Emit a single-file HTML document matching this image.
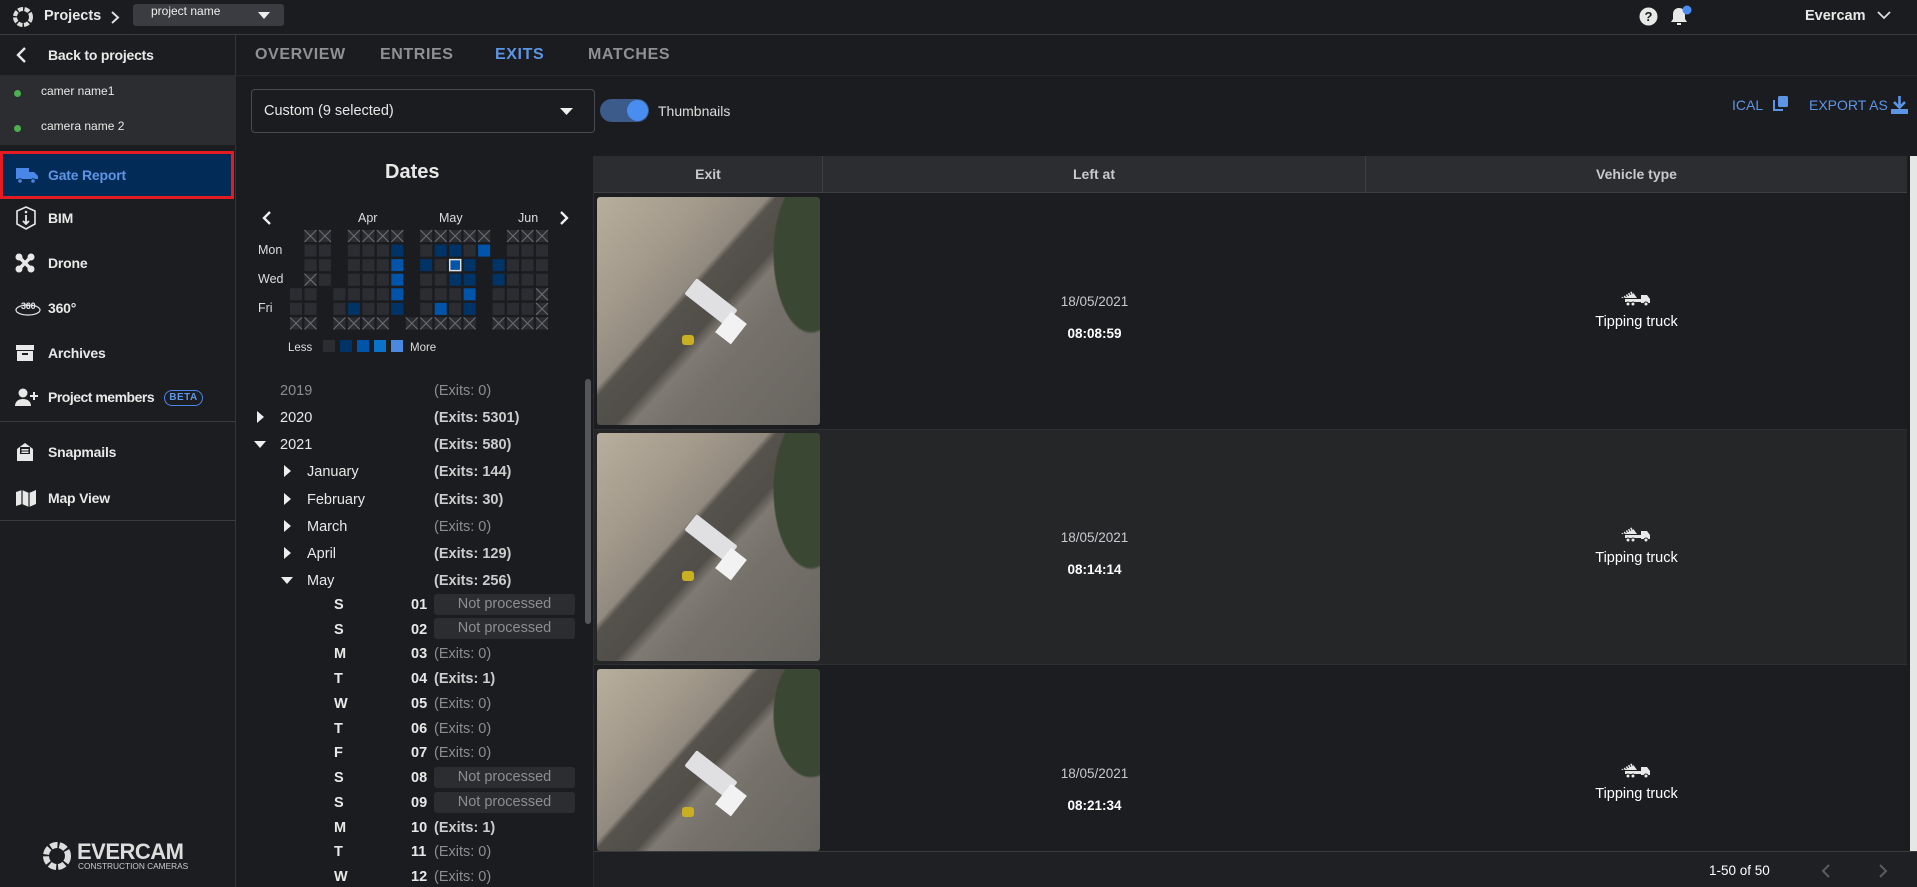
<!DOCTYPE html>
<html><head><meta charset="utf-8">
<style>
*{box-sizing:border-box;margin:0;padding:0}
html,body{width:1917px;height:887px;overflow:hidden;background:#1b1c1f;font-family:"Liberation Sans",Arial,sans-serif;color:#e8e8e8}
.a{position:absolute}
.top{left:0;top:0;width:1917px;height:35px;background:#1b1c1f;border-bottom:1px solid #3a3b3f}
.side{left:0;top:35px;width:236px;height:852px;background:#1c1d20;border-right:1px solid #333438}
.it{position:absolute;left:0;width:236px;height:40px;display:flex;align-items:center;font-size:14px;font-weight:bold;color:#e8e8e8;letter-spacing:-.2px}
.it svg{position:absolute;left:15px}
.it span{position:absolute;left:48px}
.tab{top:46px;font-size:16px;font-weight:bold;letter-spacing:.6px;color:#8e9096}
.yr{font-size:14.5px}
.gr{color:#8c8d92}
.np{position:absolute;left:434px;width:141px;height:21px;background:#2c2d31;border-radius:3px;color:#8c8d92;font-size:14.5px;text-align:center;line-height:21px}
.th{top:156px;height:37px;background:#2c2d30;border-bottom:1px solid #3e3f43;font-size:14px;font-weight:bold;color:#c8c9cc;text-align:center;line-height:36px}
.img{position:absolute;left:597px;width:223px;border-radius:3px;overflow:hidden;
background:
radial-gradient(ellipse 22% 45% at 96% 25%,#3a4733 0 75%,transparent 78%),
linear-gradient(132deg,transparent 0 40%,rgba(40,38,36,.55) 42% 52%,transparent 56%),
linear-gradient(132deg,#b8ae9e 0%,#a49a8b 25%,#8a847b 45%,#76716b 65%,#68645f 100%)}
.img .tr{position:absolute;left:88px;top:95px;width:52px;height:20px;background:#e0e0e2;transform:rotate(38deg);border-radius:2px}
.img .tr2{position:absolute;left:124px;top:118px;width:20px;height:26px;background:#f2f2f2;transform:rotate(38deg)}
.img .y{position:absolute;left:85px;top:138px;width:12px;height:10px;background:#c8b022;border-radius:3px}
.cell{font-size:13.5px;color:#c8c9cc}
</style></head><body>

<div class="a top">
  <svg class="a" style="left:12px;top:6px" width="22" height="22" viewBox="0 0 22 22"><circle cx="11" cy="11" r="8" fill="none" stroke="#ddd" stroke-width="4" stroke-dasharray="5 1.5"/><circle cx="11" cy="11" r="4" fill="#1b1c1f"/></svg>
  <div class="a" style="left:44px;top:8px;font-size:14.5px;font-weight:bold">Projects</div>
  <svg class="a" style="left:110px;top:11px" width="10" height="13"><path d="M2 1l6 5.5L2 12" stroke="#ddd" stroke-width="2" fill="none"/></svg>
  <div class="a" style="left:133px;top:4px;width:151px;height:22px;background:#3a3c42;border-radius:3px"></div>
  <div class="a" style="left:151px;top:4px;font-size:12px;color:#eee">project name</div>
  <svg class="a" style="left:258px;top:12px" width="12" height="7"><path d="M0 0h12L6 7z" fill="#eee"/></svg>
  <svg class="a" style="left:1639px;top:7px" width="19" height="19"><circle cx="9.5" cy="9.5" r="9" fill="#e8e8e8"/><text x="9.5" y="14" font-size="13" font-weight="bold" text-anchor="middle" fill="#1b1c1f" font-family="Liberation Sans">?</text></svg>
  <svg class="a" style="left:1670px;top:5px" width="24" height="22"><path d="M9 3c-4 0-6 3-6 6v5l-2 3h16l-2-3V9c0-3-2-6-6-6z" fill="#e8e8e8"/><rect x="7" y="18" width="4" height="2" fill="#e8e8e8"/><circle cx="17" cy="5" r="4.5" fill="#4a8df0"/></svg>
  <div class="a" style="left:1805px;top:8px;font-size:14.5px;font-weight:bold">Evercam</div>
  <svg class="a" style="left:1877px;top:11px" width="14" height="9"><path d="M1 1l6 6 6-6" stroke="#ddd" stroke-width="1.8" fill="none"/></svg>
</div>

<div class="a side">
  <div class="it" style="top:0"><svg width="14" height="16"><path d="M10 1L3 8l7 7" stroke="#e8e8e8" stroke-width="2.4" fill="none"/></svg><span>Back to projects</span></div>
  <div class="a" style="left:0;top:40px;width:236px;height:70px;background:#2c2d30"></div>
  <div class="a" style="left:14px;top:55px;width:7px;height:7px;border-radius:50%;background:#4caf50"></div>
  <div class="a" style="left:41px;top:49px;font-size:12px">camer name1</div>
  <div class="a" style="left:14px;top:90px;width:7px;height:7px;border-radius:50%;background:#4caf50"></div>
  <div class="a" style="left:41px;top:84px;font-size:12px">camera name 2</div>
  <div class="a" style="left:0;top:116px;width:234px;height:48px;background:#032b57;border:3px solid #e31b23"></div>
  <div class="it" style="top:120px;color:#5d95e6"><svg width="24" height="18"><path d="M1 2h13v11H1zM14 6h5l4 4v3h-9z" fill="#4a86e8"/><circle cx="5" cy="15" r="2.3" fill="#4a86e8" stroke="#032b57"/><circle cx="18" cy="15" r="2.3" fill="#4a86e8" stroke="#032b57"/></svg><span>Gate Report</span></div>
  <div class="it" style="top:163px"><svg width="22" height="24"><path d="M11 1l9 4v13l-9 5-9-5V5z" fill="none" stroke="#e8e8e8" stroke-width="1.6"/><path d="M11 9v9M8 15l3 3 3-3" stroke="#e8e8e8" stroke-width="1.8" fill="none"/><circle cx="11" cy="6" r="1.3" fill="#e8e8e8"/></svg><span>BIM</span></div>
  <div class="it" style="top:208px"><svg width="20" height="20"><circle cx="4" cy="4" r="3.5" fill="#e8e8e8"/><circle cx="16" cy="4" r="3.5" fill="#e8e8e8"/><circle cx="4" cy="16" r="3.5" fill="#e8e8e8"/><circle cx="16" cy="16" r="3.5" fill="#e8e8e8"/><path d="M4 4l12 12M16 4L4 16" stroke="#e8e8e8" stroke-width="3.5"/></svg><span>Drone</span></div>
  <div class="it" style="top:253px"><svg width="28" height="20"><text x="6" y="11" font-size="9" fill="#e8e8e8" font-family="Liberation Sans">360</text><ellipse cx="13" cy="12" rx="12" ry="5" fill="none" stroke="#e8e8e8" stroke-width="1.2"/></svg><span>360°</span></div>
  <div class="it" style="top:298px"><svg width="20" height="18"><rect x="1" y="1" width="18" height="5" fill="#e8e8e8"/><rect x="2" y="7" width="16" height="10" fill="#e8e8e8"/><rect x="7" y="9" width="6" height="2" fill="#1c1d20"/></svg><span>Archives</span></div>
  <div class="it" style="top:342px"><svg width="24" height="20"><circle cx="8" cy="6" r="4.5" fill="#e8e8e8"/><path d="M0 19c0-5 4-7 8-7s8 2 8 7z" fill="#e8e8e8"/><path d="M19 5v8M15 9h8" stroke="#e8e8e8" stroke-width="2"/></svg><span style="letter-spacing:-.5px">Project members</span></div>
  <div class="a" style="left:164px;top:355px;width:39px;height:16px;border:1.5px solid #4a86e8;border-radius:8px;font-size:10px;font-weight:bold;color:#5d95e6;text-align:center;line-height:13px;letter-spacing:.5px">BETA</div>
  <div class="a" style="left:0;top:386px;width:236px;height:1px;background:#3a3b3f"></div>
  <div class="it" style="top:397px"><svg width="20" height="20"><path d="M2 7l8-6 8 6v12H2z" fill="#e8e8e8"/><rect x="5" y="5" width="10" height="7" fill="#1c1d20"/><rect x="6.5" y="7" width="7" height="1.5" fill="#e8e8e8"/><rect x="6.5" y="9.5" width="7" height="1.5" fill="#e8e8e8"/></svg><span>Snapmails</span></div>
  <div class="it" style="top:443px"><svg width="22" height="20"><path d="M1 4l6-2 7 3 7-3v14l-7 3-7-3-6 2z" fill="#e8e8e8"/><path d="M7 2v15M14 5v15" stroke="#1c1d20" stroke-width="1.2"/></svg><span>Map View</span></div>
  <div class="a" style="left:0;top:485px;width:236px;height:1px;background:#3a3b3f"></div>
  <svg class="a" style="left:42px;top:806px" width="30" height="30" viewBox="0 0 30 30"><circle cx="15" cy="15" r="11" fill="none" stroke="#ddd" stroke-width="6" stroke-dasharray="7 2"/><circle cx="15" cy="15" r="5" fill="#1c1d20"/></svg>
  <div class="a" style="left:77px;top:804px;font-size:22px;font-weight:bold;color:#ddd;letter-spacing:-.5px">EVERCAM</div>
  <div class="a" style="left:78px;top:826px;font-size:8.3px;color:#ccc">CONSTRUCTION CAMERAS</div>
</div>

<div class="a tab" style="left:255px">OVERVIEW</div>
<div class="a tab" style="left:380px">ENTRIES</div>
<div class="a tab" style="left:495px;color:#5d95e6">EXITS</div>
<div class="a tab" style="left:588px">MATCHES</div>
<div class="a" style="left:236px;top:75px;width:1681px;height:1px;background:#26272a"></div>

<div class="a" style="left:251px;top:89px;width:344px;height:44px;border:1px solid #4a4b50;border-radius:4px"></div>
<div class="a" style="left:264px;top:103px;font-size:14.5px">Custom (9 selected)</div>
<svg class="a" style="left:560px;top:108px" width="13" height="7"><path d="M0 0h13L6.5 7z" fill="#eee"/></svg>
<div class="a" style="left:600px;top:99px;width:49px;height:23px;border-radius:12px;background:#3c5a8a"></div>
<div class="a" style="left:627px;top:100px;width:21px;height:21px;border-radius:50%;background:#4a8df0"></div>
<div class="a" style="left:658px;top:103px;font-size:14px;color:#ddd">Thumbnails</div>
<div class="a" style="left:1732px;top:97px;font-size:14px;color:#5d95e6">ICAL</div>
<svg class="a" style="left:1773px;top:96px" width="15" height="15"><rect x="5" y="0" width="10" height="11" rx="1.5" fill="#5d95e6"/><path d="M1 4v10h9" stroke="#5d95e6" stroke-width="2" fill="none"/></svg>
<div class="a" style="left:1809px;top:97px;font-size:14px;color:#5d95e6">EXPORT AS</div>
<svg class="a" style="left:1890px;top:95px" width="19" height="20"><path d="M9.5 1v11M4 7l5.5 5.5L15 7" stroke="#5d95e6" stroke-width="2.6" fill="none"/><path d="M1 14h17v5H1z" fill="#5d95e6"/></svg>

<div class="a" style="left:385px;top:161px;font-size:20px;font-weight:bold">Dates</div>
<svg class="a" style="left:262px;top:211px" width="10" height="14"><path d="M8 1L2 7l6 6" stroke="#eee" stroke-width="2.4" fill="none"/></svg>
<svg class="a" style="left:559px;top:211px" width="10" height="14"><path d="M2 1l6 6-6 6" stroke="#eee" stroke-width="2.4" fill="none"/></svg>
<div class="a" style="left:358px;top:211px;font-size:12.5px;color:#ddd">Apr</div>
<div class="a" style="left:439px;top:211px;font-size:12.5px;color:#ddd">May</div>
<div class="a" style="left:518px;top:211px;font-size:12.5px;color:#ddd">Jun</div>
<div class="a" style="left:258px;top:243px;font-size:12.5px;color:#ddd">Mon</div>
<div class="a" style="left:258px;top:272px;font-size:12.5px;color:#ddd">Wed</div>
<div class="a" style="left:258px;top:301px;font-size:12.5px;color:#ddd">Fri</div>
<svg class="a" style="left:0;top:0" width="600" height="360">
<defs>
<g id="d"><rect width="12" height="12" fill="#2c2d33"/></g>
<g id="x"><rect width="12" height="12" fill="#2c2d33"/><path d="M0 0L12 12M12 0L0 12" stroke="#6a6b70" stroke-width="1.1"/></g>
<g id="b1"><rect width="12" height="12" fill="#003466"/></g>
<g id="b2"><rect width="12" height="12" fill="#0055aa"/></g>
</defs>
<use href="#x" x="304.5" y="230"/><use href="#x" x="319" y="230"/><use href="#x" x="347.9" y="230"/><use href="#x" x="362.4" y="230"/><use href="#x" x="376.8" y="230"/><use href="#x" x="391.3" y="230"/><use href="#x" x="420.2" y="230"/><use href="#x" x="434.7" y="230"/><use href="#x" x="449.2" y="230"/><use href="#x" x="463.6" y="230"/><use href="#x" x="478.1" y="230"/><use href="#x" x="507" y="230"/><use href="#x" x="521.5" y="230"/><use href="#x" x="536" y="230"/>
<use href="#d" x="304.5" y="244.6"/><use href="#d" x="319" y="244.6"/><use href="#d" x="347.9" y="244.6"/><use href="#d" x="362.4" y="244.6"/><use href="#d" x="376.8" y="244.6"/><use href="#b1" x="391.3" y="244.6"/><use href="#d" x="420.2" y="244.6"/><use href="#b1" x="434.7" y="244.6"/><use href="#b1" x="449.2" y="244.6"/><use href="#d" x="463.6" y="244.6"/><use href="#b2" x="478.1" y="244.6"/><use href="#d" x="507" y="244.6"/><use href="#d" x="521.5" y="244.6"/><use href="#d" x="536" y="244.6"/>
<use href="#d" x="304.5" y="259.1"/><use href="#d" x="319" y="259.1"/><use href="#d" x="347.9" y="259.1"/><use href="#d" x="362.4" y="259.1"/><use href="#d" x="376.8" y="259.1"/><use href="#b2" x="391.3" y="259.1"/><use href="#b1" x="420.2" y="259.1"/><use href="#d" x="434.7" y="259.1"/><rect x="449.7" y="259.6" width="11" height="11" fill="#0055aa" stroke="#e0e0e0" stroke-width="1.5"/><use href="#b1" x="463.6" y="259.1"/><use href="#b1" x="492.6" y="259.1"/><use href="#d" x="507" y="259.1"/><use href="#d" x="521.5" y="259.1"/><use href="#d" x="536" y="259.1"/>
<use href="#x" x="304.5" y="273.7"/><use href="#d" x="319" y="273.7"/><use href="#d" x="347.9" y="273.7"/><use href="#d" x="362.4" y="273.7"/><use href="#d" x="376.8" y="273.7"/><use href="#b2" x="391.3" y="273.7"/><use href="#d" x="420.2" y="273.7"/><use href="#d" x="434.7" y="273.7"/><use href="#b1" x="449.2" y="273.7"/><use href="#b1" x="463.6" y="273.7"/><use href="#b1" x="492.6" y="273.7"/><use href="#d" x="507" y="273.7"/><use href="#d" x="521.5" y="273.7"/><use href="#d" x="536" y="273.7"/>
<use href="#d" x="290" y="288.3"/><use href="#d" x="304.5" y="288.3"/><use href="#d" x="333.4" y="288.3"/><use href="#d" x="347.9" y="288.3"/><use href="#d" x="362.4" y="288.3"/><use href="#d" x="376.8" y="288.3"/><use href="#b2" x="391.3" y="288.3"/><use href="#d" x="420.2" y="288.3"/><use href="#d" x="434.7" y="288.3"/><use href="#d" x="449.2" y="288.3"/><use href="#b2" x="463.6" y="288.3"/><use href="#d" x="492.6" y="288.3"/><use href="#d" x="507" y="288.3"/><use href="#d" x="521.5" y="288.3"/><use href="#x" x="536" y="288.3"/>
<use href="#d" x="290" y="302.9"/><use href="#d" x="304.5" y="302.9"/><use href="#d" x="333.4" y="302.9"/><use href="#b1" x="347.9" y="302.9"/><use href="#d" x="362.4" y="302.9"/><use href="#d" x="376.8" y="302.9"/><use href="#b1" x="391.3" y="302.9"/><use href="#d" x="420.2" y="302.9"/><use href="#b2" x="434.7" y="302.9"/><use href="#d" x="449.2" y="302.9"/><use href="#b1" x="463.6" y="302.9"/><use href="#d" x="492.6" y="302.9"/><use href="#d" x="507" y="302.9"/><use href="#d" x="521.5" y="302.9"/><use href="#x" x="536" y="302.9"/>
<use href="#x" x="290" y="317.4"/><use href="#x" x="304.5" y="317.4"/><use href="#x" x="333.4" y="317.4"/><use href="#x" x="347.9" y="317.4"/><use href="#x" x="362.4" y="317.4"/><use href="#x" x="376.8" y="317.4"/><use href="#x" x="405.8" y="317.4"/><use href="#x" x="420.2" y="317.4"/><use href="#x" x="434.7" y="317.4"/><use href="#x" x="449.2" y="317.4"/><use href="#x" x="463.6" y="317.4"/><use href="#x" x="492.6" y="317.4"/><use href="#x" x="507" y="317.4"/><use href="#x" x="521.5" y="317.4"/><use href="#x" x="536" y="317.4"/>
<rect x="323" y="340" width="12" height="12" fill="#2c2d33"/><rect x="340" y="340" width="12" height="12" fill="#003466"/><rect x="357" y="340" width="12" height="12" fill="#0055aa"/><rect x="374" y="340" width="12" height="12" fill="#0b72c9"/><rect x="391" y="340" width="12" height="12" fill="#4a89e0"/>
<text x="288" y="351" font-size="11.5" fill="#ddd" font-family="Liberation Sans">Less</text>
<text x="410" y="351" font-size="11.5" fill="#ddd" font-family="Liberation Sans">More</text>
</svg>

<div class="a yr gr" style="left:280px;top:383px">2019</div><div class="a yr gr" style="left:434px;top:383px">(Exits: 0)</div>
<svg class="a" style="left:257px;top:411px" width="8" height="12"><path d="M0 0l7 6-7 6z" fill="#eee"/></svg>
<div class="a yr" style="left:280px;top:410px">2020</div><div class="a yr" style="left:434px;top:410px;font-weight:bold;color:#ccc">(Exits: 5301)</div>
<svg class="a" style="left:254px;top:441px" width="12" height="8"><path d="M0 0h12L6 7z" fill="#eee"/></svg>
<div class="a yr" style="left:280px;top:437px">2021</div><div class="a yr" style="left:434px;top:437px;font-weight:bold;color:#ccc">(Exits: 580)</div>
<svg class="a" style="left:284px;top:465px" width="8" height="12"><path d="M0 0l7 6-7 6z" fill="#eee"/></svg>
<div class="a yr" style="left:307px;top:464px">January</div><div class="a yr" style="left:434px;top:464px;font-weight:bold;color:#ccc">(Exits: 144)</div>
<svg class="a" style="left:284px;top:493px" width="8" height="12"><path d="M0 0l7 6-7 6z" fill="#eee"/></svg>
<div class="a yr" style="left:307px;top:492px">February</div><div class="a yr" style="left:434px;top:492px;font-weight:bold;color:#ccc">(Exits: 30)</div>
<svg class="a" style="left:284px;top:520px" width="8" height="12"><path d="M0 0l7 6-7 6z" fill="#eee"/></svg>
<div class="a yr" style="left:307px;top:519px">March</div><div class="a yr gr" style="left:434px;top:519px">(Exits: 0)</div>
<svg class="a" style="left:284px;top:547px" width="8" height="12"><path d="M0 0l7 6-7 6z" fill="#eee"/></svg>
<div class="a yr" style="left:307px;top:546px">April</div><div class="a yr" style="left:434px;top:546px;font-weight:bold;color:#ccc">(Exits: 129)</div>
<svg class="a" style="left:281px;top:577px" width="12" height="8"><path d="M0 0h12L6 7z" fill="#eee"/></svg>
<div class="a yr" style="left:307px;top:573px">May</div><div class="a yr" style="left:434px;top:573px;font-weight:bold;color:#ccc">(Exits: 256)</div>

<div class="a yr" style="left:334px;top:597px;font-weight:bold">S</div><div class="a yr" style="left:411px;top:597px;font-weight:bold">01</div><div class="np" style="top:594px">Not processed</div>
<div class="a yr" style="left:334px;top:622px;font-weight:bold">S</div><div class="a yr" style="left:411px;top:622px;font-weight:bold">02</div><div class="np" style="top:618px">Not processed</div>
<div class="a yr" style="left:334px;top:646px;font-weight:bold">M</div><div class="a yr" style="left:411px;top:646px;font-weight:bold">03</div><div class="a yr gr" style="left:434px;top:646px">(Exits: 0)</div>
<div class="a yr" style="left:334px;top:671px;font-weight:bold">T</div><div class="a yr" style="left:411px;top:671px;font-weight:bold">04</div><div class="a yr" style="left:434px;top:671px;font-weight:bold;color:#ccc">(Exits: 1)</div>
<div class="a yr" style="left:334px;top:696px;font-weight:bold">W</div><div class="a yr" style="left:411px;top:696px;font-weight:bold">05</div><div class="a yr gr" style="left:434px;top:696px">(Exits: 0)</div>
<div class="a yr" style="left:334px;top:721px;font-weight:bold">T</div><div class="a yr" style="left:411px;top:721px;font-weight:bold">06</div><div class="a yr gr" style="left:434px;top:721px">(Exits: 0)</div>
<div class="a yr" style="left:334px;top:745px;font-weight:bold">F</div><div class="a yr" style="left:411px;top:745px;font-weight:bold">07</div><div class="a yr gr" style="left:434px;top:745px">(Exits: 0)</div>
<div class="a yr" style="left:334px;top:770px;font-weight:bold">S</div><div class="a yr" style="left:411px;top:770px;font-weight:bold">08</div><div class="np" style="top:767px">Not processed</div>
<div class="a yr" style="left:334px;top:795px;font-weight:bold">S</div><div class="a yr" style="left:411px;top:795px;font-weight:bold">09</div><div class="np" style="top:792px">Not processed</div>
<div class="a yr" style="left:334px;top:820px;font-weight:bold">M</div><div class="a yr" style="left:411px;top:820px;font-weight:bold">10</div><div class="a yr" style="left:434px;top:820px;font-weight:bold;color:#ccc">(Exits: 1)</div>
<div class="a yr" style="left:334px;top:844px;font-weight:bold">T</div><div class="a yr" style="left:411px;top:844px;font-weight:bold">11</div><div class="a yr gr" style="left:434px;top:844px">(Exits: 0)</div>
<div class="a yr" style="left:334px;top:869px;font-weight:bold">W</div><div class="a yr" style="left:411px;top:869px;font-weight:bold">12</div><div class="a yr gr" style="left:434px;top:869px">(Exits: 0)</div>
<div class="a" style="left:585px;top:379px;width:6px;height:245px;background:#55565a;border-radius:3px"></div>
<div class="a" style="left:593px;top:156px;width:1px;height:731px;background:#2c2d30"></div>

<div class="a" style="left:594px;top:193px;width:1313px;height:236px;background:#1c1d20"></div>
<div class="a" style="left:594px;top:429px;width:1313px;height:236px;background:#252628;border-top:1px solid #2e2f32;border-bottom:1px solid #2e2f32"></div>
<div class="a" style="left:594px;top:665px;width:1313px;height:186px;background:#1c1d20"></div>
<div class="a th" style="left:594px;width:229px;border-right:1px solid #3e3f43">Exit</div>
<div class="a th" style="left:823px;width:543px;border-right:1px solid #3e3f43">Left at</div>
<div class="a th" style="left:1366px;width:541px">Vehicle type</div>
<div class="a" style="left:1910px;top:156px;width:7px;height:695px;background:#e6e6e6"></div>

<div class="img" style="top:197px;height:228px"><div class="tr"></div><div class="tr2"></div><div class="y"></div></div>
<div class="img" style="top:433px;height:228px"><div class="tr"></div><div class="tr2"></div><div class="y"></div></div>
<div class="img" style="top:669px;height:182px"><div class="tr"></div><div class="tr2"></div><div class="y"></div></div>

<div class="a cell" style="left:823px;width:543px;text-align:center;top:294px">18/05/2021</div>
<div class="a cell" style="left:823px;width:543px;text-align:center;top:326px;color:#fff;font-weight:bold">08:08:59</div>
<div class="a cell" style="left:823px;width:543px;text-align:center;top:530px">18/05/2021</div>
<div class="a cell" style="left:823px;width:543px;text-align:center;top:562px;color:#fff;font-weight:bold">08:14:14</div>
<div class="a cell" style="left:823px;width:543px;text-align:center;top:766px">18/05/2021</div>
<div class="a cell" style="left:823px;width:543px;text-align:center;top:798px;color:#fff;font-weight:bold">08:21:34</div>

<svg class="a" style="left:1619px;top:289px" width="33" height="18"><path d="M2 9l11-7 5 7z" fill="#e8e8e8"/><path d="M4 8l10-5" stroke="#1c1d20" stroke-dasharray="1 1.5" stroke-width="3"/><rect x="6" y="10" width="16" height="3" fill="#e8e8e8"/><path d="M22 6h6l3 4v4h-9z" fill="#e8e8e8"/><circle cx="9" cy="15" r="2" fill="#e8e8e8" stroke="#1c1d20"/><circle cx="14" cy="15" r="2" fill="#e8e8e8" stroke="#1c1d20"/><circle cx="27" cy="15" r="2" fill="#e8e8e8" stroke="#1c1d20"/></svg>
<div class="a" style="left:1366px;width:541px;text-align:center;top:314px;font-size:14.5px;color:#fff">Tipping truck</div>
<svg class="a" style="left:1619px;top:525px" width="33" height="18"><path d="M2 9l11-7 5 7z" fill="#e8e8e8"/><path d="M4 8l10-5" stroke="#252628" stroke-dasharray="1 1.5" stroke-width="3"/><rect x="6" y="10" width="16" height="3" fill="#e8e8e8"/><path d="M22 6h6l3 4v4h-9z" fill="#e8e8e8"/><circle cx="9" cy="15" r="2" fill="#e8e8e8" stroke="#252628"/><circle cx="14" cy="15" r="2" fill="#e8e8e8" stroke="#252628"/><circle cx="27" cy="15" r="2" fill="#e8e8e8" stroke="#252628"/></svg>
<div class="a" style="left:1366px;width:541px;text-align:center;top:550px;font-size:14.5px;color:#fff">Tipping truck</div>
<svg class="a" style="left:1619px;top:761px" width="33" height="18"><path d="M2 9l11-7 5 7z" fill="#e8e8e8"/><path d="M4 8l10-5" stroke="#1c1d20" stroke-dasharray="1 1.5" stroke-width="3"/><rect x="6" y="10" width="16" height="3" fill="#e8e8e8"/><path d="M22 6h6l3 4v4h-9z" fill="#e8e8e8"/><circle cx="9" cy="15" r="2" fill="#e8e8e8" stroke="#1c1d20"/><circle cx="14" cy="15" r="2" fill="#e8e8e8" stroke="#1c1d20"/><circle cx="27" cy="15" r="2" fill="#e8e8e8" stroke="#1c1d20"/></svg>
<div class="a" style="left:1366px;width:541px;text-align:center;top:786px;font-size:14.5px;color:#fff">Tipping truck</div>

<div class="a" style="left:594px;top:851px;width:1323px;height:36px;background:#1f2023;border-top:1px solid #3a3b3f"></div>
<div class="a" style="left:1709px;top:863px;font-size:13.5px;color:#fff">1-50 of 50</div>
<svg class="a" style="left:1821px;top:864px" width="10" height="14"><path d="M8 1L2 7l6 6" stroke="#5a5b60" stroke-width="2" fill="none"/></svg>
<svg class="a" style="left:1878px;top:864px" width="10" height="14"><path d="M2 1l6 6-6 6" stroke="#5a5b60" stroke-width="2" fill="none"/></svg>
</body></html>
